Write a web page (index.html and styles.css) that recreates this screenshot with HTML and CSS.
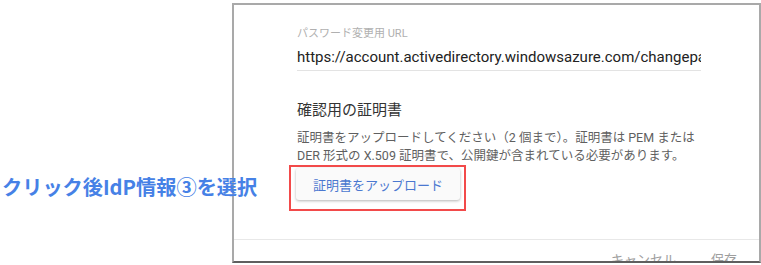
FILE: index.html
```html
<!DOCTYPE html>
<html lang="ja">
<head>
    <meta charset="UTF-8">
    <meta name="viewport" content="width=device-width, initial-scale=1.0">
    <title>証明書のアップロード</title>
    <link rel="stylesheet" href="styles.css">
</head>
<body>
    <div class="shot">
        <div class="note">クリック後IdP情報③を選択</div>
        <div class="frame">
            <div class="dialog-body">
                <div class="field-label">パスワード変更用 URL</div>
                <div class="field-input">https://account.activedirectory.windowsazure.com/changepassword.aspx</div>
                <div class="section-title">確認用の証明書</div>
                <p class="section-text">証明書をアップロードしてください（2 個まで）。証明書は PEM または DER 形式の X.509 証明書で、公開鍵が含まれている必要があります。</p>
                <button class="upload-button">証明書をアップロード</button>
            </div>
            <div class="dialog-footer">
                <span class="footer-button">キャンセル</span>
                <span class="footer-button">保存</span>
            </div>
        </div>
        <div class="highlight"></div>
    </div>
</body>
</html>
```

FILE: styles.css
```css
body {
    margin: 0;
    background: #fff;
    font-family: Roboto, "Noto Sans CJK JP", sans-serif;
}
.shot {
    position: relative;
}
.frame {
    margin: 3px 0 0 232px;
    width: 525px;
    height: 256px;
    border: 2px solid #a9a9a9;
    border-bottom-color: #5f5f5f;
    overflow: hidden;
}
.dialog-body {
    padding: 22px 0 0 63px;
    height: 212px;
    border-bottom: 1px solid #e8e8e8;
}
.field-label {
    font-size: 11px;
    line-height: 14px;
    color: #b0b0b0;
}
.field-input {
    margin-top: 6px;
    width: 404px;
    font-size: 15px;
    line-height: 20px;
    color: #222;
    white-space: nowrap;
    overflow: hidden;
    padding-bottom: 3px;
    border-bottom: 1px solid #e3e3e3;
}
.section-title {
    margin-top: 29px;
    font-size: 15px;
    line-height: 20px;
    color: #333;
}
.section-text {
    margin: 9px 0 0;
    width: 404px;
    font-size: 12.5px;
    line-height: 18px;
    color: #5f5f5f;
}
.upload-button {
    margin: 3px 0 0 -1px;
    width: 164px;
    height: 32px;
    padding: 0;
    border: none;
    border-radius: 3px;
    background: #fafafa;
    box-shadow: 0 1px 3px rgba(0, 0, 0, 0.3);
    font-family: inherit;
    font-size: 13px;
    color: #4a78d0;
}
.dialog-footer {
    display: flex;
    justify-content: flex-end;
    gap: 35px;
    padding: 11px 22px 0 0;
}
.footer-button {
    font-size: 13px;
    line-height: 18px;
    color: #9e9e9e;
}
.note {
    position: absolute;
    left: 2px;
    top: 172px;
    z-index: 2;
    font-family: "Noto Sans CJK JP", sans-serif;
    font-weight: bold;
    font-size: 20.2px;
    line-height: 24px;
    color: #4681e6;
}
.highlight {
    position: absolute;
    left: 289px;
    top: 162px;
    width: 173px;
    height: 42px;
    border: 2px solid #f24a4a;
}
```
